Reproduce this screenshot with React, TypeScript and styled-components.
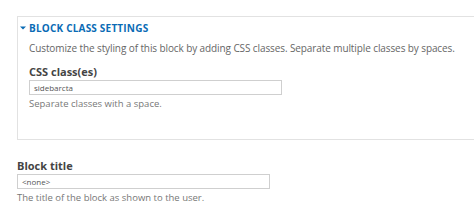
import React from "react";
import styled, { createGlobalStyle } from "styled-components";

const Global = createGlobalStyle`
  html, body { margin: 0; padding: 0; background: #fff; }
  body { font-family: "Open Sans", "DejaVu Sans", sans-serif; color: #666; }
`;

const Page = styled.div`
  padding: 16px 0 0 17px;
  width: 474px;
  box-sizing: border-box;
  overflow: hidden;
`;

const Fieldset = styled.section`
  width: 480px;
  box-sizing: border-box;
  border: 1px solid #e2e2e2;
  border-right: none;
  padding: 5px 0 0 11px;
  height: 124px;
  display: flex;
  flex-direction: column;
`;

const Legend = styled.div`
  display: flex;
  align-items: center;
  gap: 3px;
  margin-left: -9px;
  color: #0a6bb5;
  font-weight: 700;
  font-size: 10px;
  letter-spacing: 0.2px;
  text-transform: uppercase;
  line-height: 12px;
`;

const Caret = styled.svg`
  width: 6px;
  height: 6px;
`;

const Description = styled.p`
  margin: 7px 0 0;
  font-size: 10px;
  letter-spacing: -0.1px;
  line-height: 14px;
  color: #666;
`;

const Label = styled.label<{ $top: number }>`
  display: block;
  margin-top: ${(p) => p.$top}px;
  font-size: 11px;
  font-weight: 700;
  line-height: 14px;
  color: #444;
`;

const Input = styled.div`
  width: 253px;
  height: 15px;
  box-sizing: border-box;
  border: 1px solid #cfcfcf;
  margin-top: 1px;
  padding: 0 4px;
  font-size: 8px;
  line-height: 13px;
  color: #555;
`;

const Help = styled.p`
  margin: 2px 0 0;
  font-size: 9.5px;
  line-height: 14px;
  color: #777;
`;

const Field = styled.div`
  margin-top: 19px;
`;

export default function App() {
  return (
    <Page>
      <Global />
      <Fieldset>
        <Legend>
          <Caret viewBox="0 0 6 6">
            <path d="M0 1.5 L6 1.5 L3 4.5 Z" fill="#0a6bb5" />
          </Caret>
          Block class settings
        </Legend>
        <Description>
          Customize the styling of this block by adding CSS classes. Separate multiple classes by spaces.
        </Description>
        <Label $top={10}>CSS class(es)</Label>
        <Input>sidebarcta</Input>
        <Help>Separate classes with a space.</Help>
      </Fieldset>
      <Field>
        <Label $top={0}>Block title</Label>
        <Input>&lt;none&gt;</Input>
        <Help>The title of the block as shown to the user.</Help>
      </Field>
    </Page>
  );
}
